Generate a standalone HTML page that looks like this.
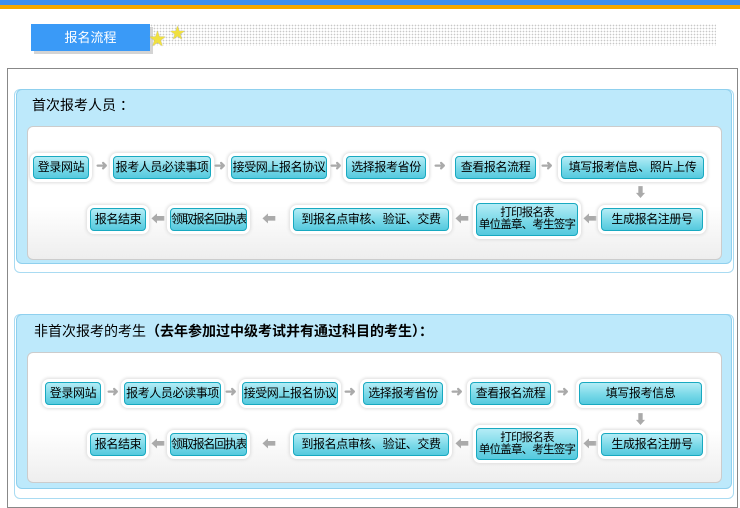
<!DOCTYPE html>
<html><head><meta charset="utf-8"><style>
body{margin:0;width:740px;height:501px;background:#fff;position:relative;overflow:hidden;font-family:"Liberation Sans","Noto Sans CJK SC",sans-serif;}
.a{position:absolute}
.btn{position:absolute;box-sizing:border-box;border:1px solid #18a9c0;border-radius:4px;background:linear-gradient(#b4ecf6,#7ad9e8 55%,#55c9de);font-size:12px;letter-spacing:-0.4px;color:#000;text-align:center;line-height:21px;height:23px;box-shadow:0 0 0 3px #fff,0 0 3px 4px #ddd;white-space:nowrap;overflow:hidden}
.two{line-height:12px;padding-top:3px;letter-spacing:-0.8px;font-size:11.5px}
.t{letter-spacing:-1.2px}
.ar{position:absolute;color:#aaa;font-size:14px;font-weight:bold}
.sec{position:absolute;left:16px;width:714px;background:#bde9fb;border:1px solid #8fd0ee;border-radius:6px}
.out{position:absolute;left:14px;width:718px;border:1px solid #a9dbf2;border-radius:6px}
.in{position:absolute;left:27px;width:693px;background:linear-gradient(#fff 60%,#eee);border:1px solid #ccc;border-radius:6px}
</style></head><body>
<div class="a" style="left:0;top:0;width:740px;height:5px;background:#3d8ff0"></div>
<div class="a" style="left:0;top:5px;width:740px;height:4px;background:#f5a800"></div>
<div class="a" style="left:150px;top:24px;width:566px;height:22px;background-image:radial-gradient(#c8c8c8 0.7px,transparent 0.9px);background-size:3px 3px"></div>
<div class="a" style="left:34px;top:27px;width:119px;height:27px;background:#d4d4d4"></div>
<div class="a" style="left:31px;top:24px;width:119px;height:27px;background:#3a9af7;color:#fff;font-size:13px;line-height:27px;text-align:center">报名流程</div>
<div class="a" style="left:149px;top:25px;color:#f0e040;font-size:17px;text-shadow:0 0 1px #886">★</div>
<div class="a" style="left:170px;top:22px;color:#f0e040;font-size:15px;text-shadow:0 0 1px #886">★</div>
<div class="a" style="left:7px;top:68px;width:731px;height:440px;border:1px solid #888;box-sizing:border-box"></div>

<div class="out" style="top:89px;height:182px"></div>
<div class="sec" style="top:89px;height:173px"></div>
<div class="a" style="left:32px;top:95px;font-size:14px">首次报考人员 ：</div>
<div class="in" style="top:126px;height:132px"></div>

<div class="out" style="top:314px;height:183px"></div>
<div class="sec" style="top:314px;height:173px"></div>
<div class="a" style="left:34px;top:321px;font-size:14px">非首次报考的考生<b>（去年参加过中级考试并有通过科目的考生）：</b></div>
<div class="in" style="top:352px;height:129px"></div>

<div class="btn" style="left:33px;top:156px;width:56px">登录网站</div>
<div class="ar" style="left:96px;top:157px">➜</div>
<div class="btn" style="left:113px;top:156px;width:98px">报考人员必读事项</div>
<div class="ar" style="left:214px;top:157px">➜</div>
<div class="btn" style="left:231px;top:156px;width:96px">接受网上报名协议</div>
<div class="ar" style="left:330px;top:157px">➜</div>
<div class="btn" style="left:346px;top:156px;width:80px">选择报考省份</div>
<div class="ar" style="left:434px;top:157px">➜</div>
<div class="btn" style="left:455px;top:156px;width:81px">查看报名流程</div>
<div class="ar" style="left:541px;top:157px">➜</div>
<div class="btn" style="left:561px;top:156px;width:143px">填写报考信息、照片上传</div>
<div class="ar" style="left:634px;top:182px;font-size:13px">⬇</div>
<div class="btn" style="left:90px;top:208px;width:56px">报名结束</div>
<div class="ar" style="left:151px;top:209px">⬅</div>
<div class="btn t" style="left:170px;top:208px;width:77px">领取报名回执表</div>
<div class="ar" style="left:262px;top:209px">⬅</div>
<div class="btn" style="left:293px;top:208px;width:156px">到报名点审核、验证、交费</div>
<div class="ar" style="left:455px;top:209px">⬅</div>
<div class="btn two" style="left:476px;top:203px;width:102px;height:33px">打印报名表<br>单位盖章、考生签字</div>
<div class="ar" style="left:583px;top:209px">⬅</div>
<div class="btn" style="left:601px;top:208px;width:102px">生成报名注册号</div>

<div class="btn" style="left:45px;top:382px;width:56px">登录网站</div>
<div class="ar" style="left:107px;top:383px">➜</div>
<div class="btn" style="left:124px;top:382px;width:97px">报考人员必读事项</div>
<div class="ar" style="left:225px;top:383px">➜</div>
<div class="btn" style="left:242px;top:382px;width:96px">接受网上报名协议</div>
<div class="ar" style="left:344px;top:383px">➜</div>
<div class="btn" style="left:363px;top:382px;width:80px">选择报考省份</div>
<div class="ar" style="left:451px;top:383px">➜</div>
<div class="btn" style="left:470px;top:382px;width:81px">查看报名流程</div>
<div class="ar" style="left:557px;top:383px">➜</div>
<div class="btn" style="left:579px;top:382px;width:123px">填写报考信息</div>
<div class="ar" style="left:634px;top:409px;font-size:13px">⬇</div>
<div class="btn" style="left:90px;top:433px;width:56px">报名结束</div>
<div class="ar" style="left:151px;top:434px">⬅</div>
<div class="btn t" style="left:170px;top:433px;width:77px">领取报名回执表</div>
<div class="ar" style="left:262px;top:434px">⬅</div>
<div class="btn" style="left:293px;top:433px;width:156px">到报名点审核、验证、交费</div>
<div class="ar" style="left:455px;top:434px">⬅</div>
<div class="btn two" style="left:476px;top:428px;width:102px;height:32px">打印报名表<br>单位盖章、考生签字</div>
<div class="ar" style="left:583px;top:434px">⬅</div>
<div class="btn" style="left:601px;top:433px;width:102px">生成报名注册号</div>
</body></html>
